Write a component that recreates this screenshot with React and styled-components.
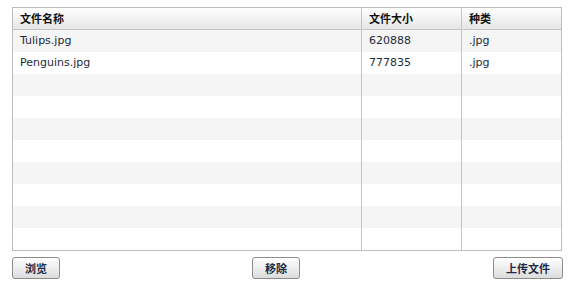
import React from 'react';
import styled, { createGlobalStyle } from 'styled-components';

const GlobalStyle = createGlobalStyle`
  html, body {
    margin: 0;
    padding: 0;
    background: #fff;
  }
  body {
    font-family: 'DejaVu Sans', Verdana, 'Noto Sans CJK SC', sans-serif;
    font-size: 11px;
    color: #222;
  }
`;

const files = [
  { name: 'Tulips.jpg', size: '620888', type: '.jpg' },
  { name: 'Penguins.jpg', size: '777835', type: '.jpg' },
];

const ROWS = 10;

const Wrap = styled.div`
  width: 550px;
  padding: 7px 0 0 12px;
`;

const Grid = styled.div`
  border: 1px solid #bdbdbd;
  display: grid;
  grid-template-columns: 349px 100px 1fr;
`;

const HeadCell = styled.div`
  height: 21px;
  line-height: 21px;
  padding-left: 7px;
  font-weight: bold;
  font-family: 'Noto Sans CJK SC', 'DejaVu Sans', sans-serif;
  color: #111;
  background: linear-gradient(#ffffff, #e6e6e6);
  border-bottom: 1px solid #c4c4c4;
  border-right: ${(p) => (p.last ? 'none' : '1px solid #c4c4c4')};
`;

const Cell = styled.div`
  height: 22px;
  line-height: 22px;
  padding-left: 7px;
  color: #1e2a3a;
  background: ${(p) => (p.odd ? '#f5f5f5' : '#ffffff')};
  border-right: ${(p) => (p.last ? 'none' : '1px solid #c4c4c4')};
  white-space: nowrap;
`;

const Actions = styled.div`
  margin-top: 6px;
  width: 551px;
  display: grid;
  grid-template-columns: 240px 1fr auto;
  align-items: center;
`;

const Button = styled.button`
  justify-self: start;
  height: 22px;
  min-width: 48px;
  padding: 0 12px;
  border: 1px solid #8c8c8c;
  border-radius: 3px;
  background: linear-gradient(#ffffff, #dcdcdc);
  font-family: 'Noto Sans CJK SC', 'DejaVu Sans', sans-serif;
  font-size: 11px;
  font-weight: bold;
  color: #1b2b48;
  cursor: pointer;
`;

export default function App() {
  const rows = Array.from({ length: ROWS }, (_, i) => files[i] || { name: '', size: '', type: '' });
  return (
    <>
      <GlobalStyle />
      <Wrap>
        <Grid>
          <HeadCell>文件名称</HeadCell>
          <HeadCell>文件大小</HeadCell>
          <HeadCell last>种类</HeadCell>
          {rows.map((r, i) => (
            <React.Fragment key={i}>
              <Cell odd={i % 2 === 0}>{r.name}</Cell>
              <Cell odd={i % 2 === 0}>{r.size}</Cell>
              <Cell odd={i % 2 === 0} last>{r.type}</Cell>
            </React.Fragment>
          ))}
        </Grid>
        <Actions>
          <Button>浏览</Button>
          <Button>移除</Button>
          <Button>上传文件</Button>
        </Actions>
      </Wrap>
    </>
  );
}
